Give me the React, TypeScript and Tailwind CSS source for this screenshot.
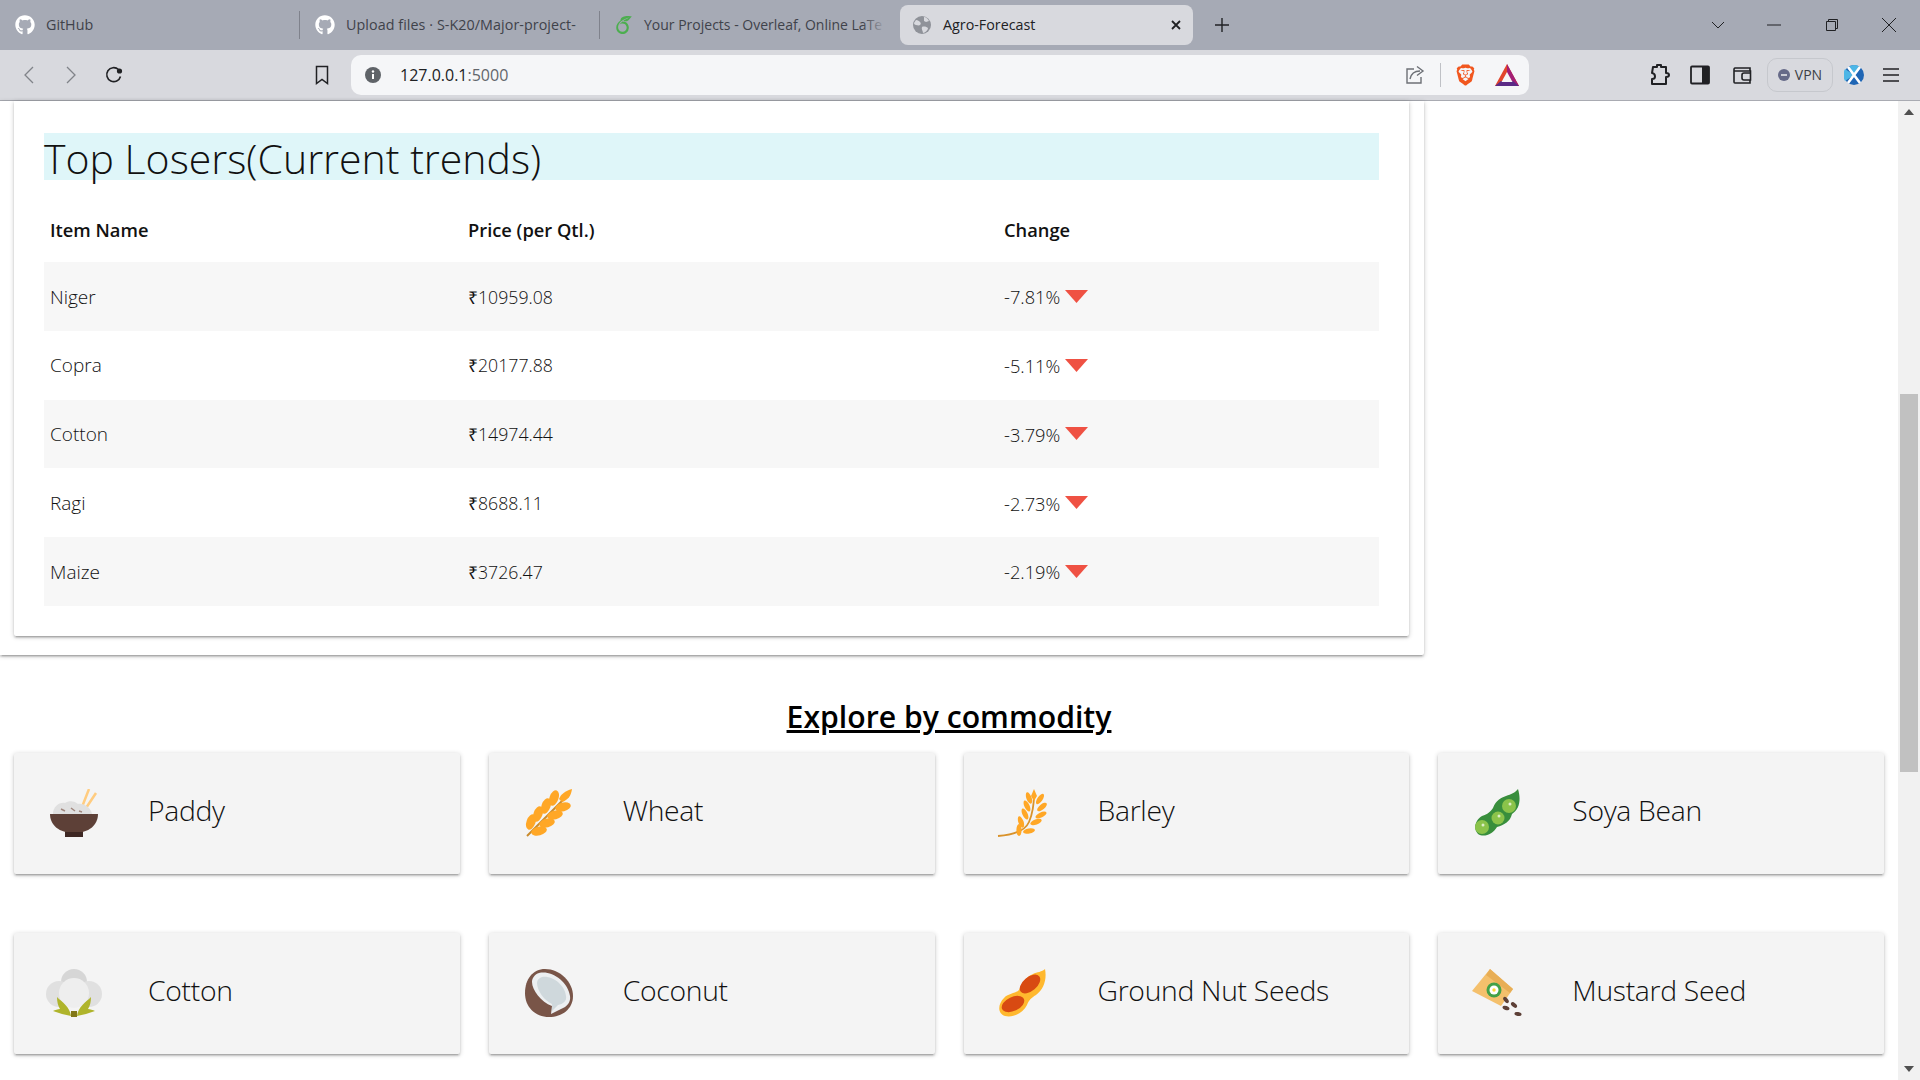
import type { ReactNode } from "react";
import { FaGithub } from "react-icons/fa";
import { SiBrave, SiOverleaf } from "react-icons/si";

const losers = [
  { name: "Niger", price: "₹10959.08", change: "-7.81%" },
  { name: "Copra", price: "₹20177.88", change: "-5.11%" },
  { name: "Cotton", price: "₹14974.44", change: "-3.79%" },
  { name: "Ragi", price: "₹8688.11", change: "-2.73%" },
  { name: "Maize", price: "₹3726.47", change: "-2.19%" },
];

const grains: [number, number, number][] = [
  [9, 33, -70], [16, 25, -70], [24, 17, -70], [32, 9, -70],
  [17, 42, -15], [25, 34, -15], [33, 26, -15], [41, 18, -15],
];

function Paddy() {
  return (
    <svg viewBox="0 0 56 48" className="w-[56px] h-[48px]">
      <path d="M36 18L43 0M40 19L50 4" stroke="#ffcc80" strokeWidth="2.5" fill="none" />
      <path d="M7 25c0-7 6-12 12-11 4-3 10-2 13 1 6-1 13 4 14 10z" fill="#e0e0e0" />
      <path d="M15 20l4 2M25 19l4 3M33 22l3 1" stroke="#a1887f" strokeWidth="1.5" />
      <path d="M4 25h48c0 11-9 19-24 19S4 36 4 25z" fill="#5d4037" />
      <rect x="19" y="43" width="18" height="5" fill="#3e2723" />
    </svg>
  );
}

function Wheat() {
  return (
    <svg viewBox="0 0 56 48" className="w-[56px] h-[48px]">
      <path d="M6 47L47 6" stroke="#c98a2b" strokeWidth="2" />
      {grains.map(([x, y, r], i) => (
        <ellipse key={i} cx={x + 1} cy={y} rx="8" ry="4.5" fill="#ffa726" transform={`rotate(${r} ${x + 1} ${y})`} />
      ))}
      <path d="M38 10c2-5 6-8 13-10-1 7-4 11-10 13z" fill="#ffa726" />
    </svg>
  );
}

function Barley() {
  return (
    <svg viewBox="0 0 56 48" className="w-[56px] h-[48px]">
      <path d="M2 47c14-1 27-5 31-14 3-7 5-17 5-28" stroke="#d9922a" strokeWidth="1.8" fill="none" />
      <path d="M38 0l3 7-3 5-3-5z" fill="#ffa726" />
      {[
        [33, 9, -20], [44, 10, 35], [31, 17, -25], [46, 18, 50], [29, 25, -25],
        [45, 26, 65], [25, 33, -20], [40, 33, 70], [23, 41, 0], [33, 42, 80],
      ].map(([x, y, r], i) => (
        <ellipse key={i} cx={x} cy={y} rx="2.6" ry="6" fill="#ffa726" transform={`rotate(${r} ${x} ${y})`} />
      ))}
    </svg>
  );
}

function Soya() {
  return (
    <svg viewBox="0 0 56 48" className="w-[56px] h-[48px]">
      <g transform="translate(-2 0)">
        <path d="M50 0c3 10 2 20-6 25-2 8-8 11-15 13-4 7-13 11-19 7-5-5-3-14 4-18 6-2 8-4 11-8 3-8 8-10 13-12 5-2 9-3 12-7z" fill="#388e3c" />
        <circle cx="14" cy="38" r="7" fill="#8bc34a" />
        <circle cx="30" cy="29" r="6.5" fill="#8bc34a" />
        <circle cx="41" cy="17" r="7" fill="#8bc34a" />
        <circle cx="15" cy="36" r="1.5" fill="#dcedc8" />
        <circle cx="31" cy="27" r="1.5" fill="#dcedc8" />
        <circle cx="42" cy="15" r="1.5" fill="#dcedc8" />
      </g>
    </svg>
  );
}

function Cotton() {
  return (
    <svg viewBox="0 0 56 48" className="w-[56px] h-[48px]">
      <circle cx="28" cy="13" r="13" fill="#d6d6d6" />
      <circle cx="13" cy="25" r="13" fill="#e0e0e0" />
      <circle cx="43" cy="25" r="13" fill="#e0e0e0" />
      <circle cx="28" cy="24" r="15" fill="#eeeeee" />
      <path d="M25 47C24 38 16 33 11 28c0 5 1 9 3 12-2 0-5 1-7 2 6 2 12 4 18 5z" fill="#afb42b" />
      <path d="M31 47c1-9 9-14 14-19 0 5-1 9-3 12 2 0 5 1 7 2-6 2-12 4-18 5z" fill="#afb42b" />
      <rect x="25" y="42" width="6" height="6" fill="#827717" />
    </svg>
  );
}

function Coconut() {
  return (
    <svg viewBox="0 0 56 48" className="w-[56px] h-[48px]">
      <path d="M24 0c15 0 28 13 28 27 0 13-11 21-24 21C14 48 4 38 4 24 4 10 12 0 24 0z" fill="#795548" />
      <path d="M18 4c12-3 29 8 31 23 1 6-3 11-9 13l-10 5 1-8C20 33 11 21 11 13c0-4 3-8 7-9z" fill="#eceff1" />
      <path d="M21 8c9-2 23 7 24 19 1 5-3 8-8 9l-6 6 0-7c-7-3-15-13-15-21 0-3 2-5 5-6z" fill="#cfd8dc" />
    </svg>
  );
}

function Peanut() {
  return (
    <svg viewBox="0 0 56 48" className="w-[56px] h-[48px]">
      <g transform="translate(-1 0)">
        <path d="M50 0c2 10-1 20-9 26-5 3-7 5-9 10-4 8-14 13-22 11C2 44 3 35 9 29c5-5 11-4 15-8 3-7 7-13 14-16 4-2 9-2 12-5z" fill="#ffb82e" />
        <ellipse cx="35" cy="15" rx="12" ry="7" fill="#d84a12" transform="rotate(-40 35 15)" />
        <ellipse cx="18" cy="35" rx="12" ry="7" fill="#d84a12" transform="rotate(-25 18 35)" />
      </g>
    </svg>
  );
}

function Mustard() {
  return (
    <svg viewBox="0 0 56 48" className="w-[56px] h-[48px]">
      <g transform="translate(-2 0)">
        <path d="M22 0L45 20 33 37 4 22z" fill="#f4c06c" />
        <path d="M22 0L45 20 42 24 18 6z" fill="#e8ae55" />
        <circle cx="26" cy="21" r="7.5" fill="#43a047" />
        <circle cx="26" cy="21" r="4.5" fill="#ffffff" />
        <circle cx="26" cy="21" r="1.7" fill="#fdd835" />
        {[
          [38, 31, 50], [46, 36, 40], [38, 39, 20], [50, 45, 10],
        ].map(([x, y, r], i) => (
          <ellipse key={i} cx={x} cy={y} rx="3.6" ry="2" fill="#5d4037" transform={`rotate(${r} ${x} ${y})`} />
        ))}
      </g>
    </svg>
  );
}

const commodities: { name: string; icon: ReactNode }[] = [
  { name: "Paddy", icon: <Paddy /> },
  { name: "Wheat", icon: <Wheat /> },
  { name: "Barley", icon: <Barley /> },
  { name: "Soya Bean", icon: <Soya /> },
  { name: "Cotton", icon: <Cotton /> },
  { name: "Coconut", icon: <Coconut /> },
  { name: "Ground Nut Seeds", icon: <Peanut /> },
  { name: "Mustard Seed", icon: <Mustard /> },
];

function TabBar() {
  return (
    <div className="flex items-center h-[50px] bg-[#a6aab5] text-[14.3px] text-[#3f424a]">
      <div className="flex items-center w-[300px] h-[28px] pl-[15px] gap-[11px] border-r border-[#7f828c]">
        <FaGithub className="text-white w-[20px] h-[20px]" />
        <span className="mb-[1px]">GitHub</span>
      </div>
      <div className="flex items-center w-[300px] h-[28px] pl-[15px] gap-[11px] border-r border-[#7f828c]">
        <FaGithub className="text-white w-[20px] h-[20px]" />
        <span className="mb-[1px] tracking-[0.07px]">Upload files · S-K20/Major-project-</span>
      </div>
      <div className="relative flex items-center w-[300px] h-[28px] pl-[15px] gap-[11px] whitespace-nowrap text-[14px]">
        <SiOverleaf className="text-[#4cae4f] w-[18px] h-[18px] shrink-0" />
        <span className="mb-[1px]">Your Projects - Overleaf, Online LaTe</span>
        <div className="absolute right-[14px] top-0 w-[24px] h-full bg-gradient-to-r from-transparent to-[#a6aab5]" />
      </div>
      <div className="flex items-center w-[293px] h-[40px] pl-[13px] pr-[12px] gap-[12px] rounded-lg bg-[#d8d9de] text-[#202124]">
        <svg viewBox="0 0 18 18" className="w-[18px] h-[18px]">
          <circle cx="9" cy="9" r="9" fill="#8f9299" />
          <path d="M3 4c2 0 3 1 4 2s1 2 0 3-3 0-4 0-2-1-2-2zM11 1c2 0 4 2 5 4l-3 1-2-1zM9 11c2-1 5 0 6 1 0 2-3 5-5 5 0-2-2-4-1-6z" fill="#d8d9de" />
        </svg>
        <span className="flex-1 mb-[1px]">Agro-Forecast</span>
        <svg viewBox="0 0 10 10" className="w-[10px] h-[10px]">
          <path d="M1 1l8 8M9 1L1 9" stroke="#202124" strokeWidth="1.8" />
        </svg>
      </div>
      <svg viewBox="0 0 16 16" className="w-[16px] h-[16px] ml-[21px]">
        <path d="M8 1v14M1 8h14" stroke="#202124" strokeWidth="1.4" />
      </svg>
      <div className="flex-1" />
      <svg viewBox="0 0 14 10" className="w-[14px] h-[10px]">
        <path d="M1 2l6 6 6-6" stroke="#202124" strokeWidth="1" fill="none" />
      </svg>
      <svg viewBox="0 0 14 14" className="w-[14px] h-[14px] ml-[42px]">
        <path d="M0 7h14" stroke="#202124" strokeWidth="1" />
      </svg>
      <svg viewBox="0 0 14 14" className="w-[14px] h-[14px] ml-[44px]">
        <path d="M1.5 3.5h9v9h-9zM3.5 3.5v-2h9v9h-2" stroke="#202124" strokeWidth="1" fill="none" />
      </svg>
      <svg viewBox="0 0 14 14" className="w-[14px] h-[14px] ml-[43px] mr-[24px]">
        <path d="M0 0l14 14M14 0L0 14" stroke="#202124" strokeWidth="1" />
      </svg>
    </div>
  );
}

function Toolbar() {
  return (
    <div className="flex items-center h-[51px] pb-[1px] bg-[#d8d9de] border-b border-[#a9abb2] text-[#202124]">
      <svg viewBox="0 0 12 18" className="w-[12px] h-[18px] ml-[23px]">
        <path d="M10 1L2 9l8 8" stroke="#808389" strokeWidth="1.3" fill="none" />
      </svg>
      <svg viewBox="0 0 12 18" className="w-[12px] h-[18px] ml-[30px]">
        <path d="M2 1l8 8-8 8" stroke="#808389" strokeWidth="1.3" fill="none" />
      </svg>
      <svg viewBox="0 0 20 20" className="w-[20px] h-[20px] ml-[27px]">
        <path d="M16.5 11.5A7 7 0 1 1 14.5 4.5" stroke="#202124" strokeWidth="1.6" fill="none" />
        <circle cx="15.5" cy="6" r="2.6" fill="#202124" />
      </svg>
      <svg viewBox="0 0 14 20" className="w-[14px] h-[20px] ml-[191px]">
        <path d="M1.5 1.5h11v17L7 14.5l-5.5 4z" stroke="#202124" strokeWidth="1.5" fill="none" />
      </svg>
      <div className="flex items-center w-[1178px] h-[40px] ml-[22px] rounded-[10px] bg-[#f5f6f8]">
        <svg viewBox="0 0 16 16" className="w-[16px] h-[16px] ml-[14px]">
          <circle cx="8" cy="8" r="8" fill="#5f6368" />
          <path d="M8 7v5" stroke="#ffffff" strokeWidth="2" />
          <circle cx="8" cy="4.5" r="1.2" fill="#ffffff" />
        </svg>
        <span className="ml-[19px] text-[16px] flex-1">
          127.0.0.1<span className="text-[#62656b]">:5000</span>
        </span>
        <svg viewBox="0 0 20 20" className="w-[20px] h-[20px]">
          <path d="M9 4H2v14h14v-6" stroke="#6d7076" strokeWidth="1.4" fill="none" />
          <path d="M5 14c1-5 5-8 10-8M12 1.5L18 6l-6 4.5" stroke="#6d7076" strokeWidth="1.4" fill="none" />
        </svg>
        <div className="w-[1px] h-[24px] bg-[#bfc1c6] ml-[15px]" />
        <SiBrave className="text-[#f1571f] w-[21px] h-[24px] ml-[14px]" />
        <svg viewBox="0 0 24 22" className="w-[24px] h-[22px] ml-[19px] mr-[10px]">
          <path d="M12 0l12 22H0z" fill="#e2452c" />
          <path d="M12 0l12 22H12z" fill="#a31e75" />
          <path d="M0 22h24l-6-5H6z" fill="#5b2a86" />
          <path d="M12 8l5.5 10h-11z" fill="#f5f6f8" />
        </svg>
      </div>
      <svg viewBox="0 0 22 24" className="w-[22px] h-[24px] ml-[119px]">
        <path d="M5 4h4V2h4v2h5v6c2 0 3 1 3 2s-1 2-3 2v7H4v-5c2 0 3-1 3-2.500S6 10 4 10z" stroke="#202124" strokeWidth="2" fill="none" strokeLinejoin="round" />
      </svg>
      <svg viewBox="0 0 20 20" className="w-[20px] h-[20px] ml-[20px]">
        <rect x="1" y="1.500" width="18" height="17" rx="1" stroke="#202124" strokeWidth="1.800" fill="none" />
        <rect x="12" y="1.500" width="7" height="17" fill="#202124" />
      </svg>
      <svg viewBox="0 0 20 20" className="w-[20px] h-[20px] ml-[22px]">
        <path d="M18 6V3H3a1.500 1.500 0 0 0-1 1.500V17a1 1 0 0 0 1 1h15v-3M2 6h16.500v9H12a2 2 0 0 1-2-2v-3a2 2 0 0 1 2-2h6.500" stroke="#202124" strokeWidth="1.600" fill="none" />
      </svg>
      <div className="flex items-center justify-center gap-[5px] w-[66px] h-[34px] ml-[15px] rounded-[10px] border border-[#c6c8cd] text-[14px] text-[#3c3f45]">
        <svg viewBox="0 0 12 12" className="w-[12px] h-[12px]">
          <circle cx="6" cy="6" r="6" fill="#666a88" />
          <path d="M3 6h6" stroke="#d8d9de" strokeWidth="1.800" />
        </svg>
        VPN
      </div>
      <svg viewBox="0 0 20 20" className="w-[20px] h-[20px] ml-[11px]">
        <circle cx="10" cy="10" r="10" fill="#1f66b5" />
        <path d="M1 4l9 6-9 6c-2-4-2-8 0-12z" fill="#4db6e6" />
        <path d="M10 0c3 0 5 1 6 3l-6 7-5-8c1-1 3-2 5-2z" fill="#4db6e6" />
        <path d="M4 2l12 16M16 2L4 18" stroke="#ffffff" strokeWidth="2.600" />
      </svg>
      <svg viewBox="0 0 18 16" className="w-[18px] h-[16px] ml-[18px]">
        <path d="M1 2h16M1 8h16M1 14h16" stroke="#202124" strokeWidth="1.600" />
      </svg>
    </div>
  );
}

function LosersTable() {
  return (
    <div className="w-[1424px] pl-[14px] pb-[19px] rounded-br-[2px] bg-white shadow-[0_2px_2px_0_rgba(0,0,0,0.14),0_3px_1px_-2px_rgba(0,0,0,0.12),0_1px_5px_0_rgba(0,0,0,0.2)]">
      <div className="w-[1395px] px-[30px] pt-[32px] pb-[30px] rounded-b-[2px] bg-white shadow-[0_2px_2px_0_rgba(0,0,0,0.14),0_3px_1px_-2px_rgba(0,0,0,0.12),0_1px_5px_0_rgba(0,0,0,0.2)]">
        <h4 className="h-[47px] text-[41px] leading-[51px] font-light text-[#111111] bg-[#dff6f9] whitespace-nowrap">
          Top Losers(Current trends)
        </h4>
        <table className="w-full mt-[19px] table-fixed text-[18.3px] text-[#111111]">
          <colgroup>
            <col className="w-[418px]" />
            <col className="w-[536px]" />
            <col />
          </colgroup>
          <thead>
            <tr className="h-[63px] text-left">
              <th className="pl-[6px] pb-[2px] font-semibold">Item Name</th>
              <th className="pl-[6px] pb-[2px] font-semibold">Price (per Qtl.)</th>
              <th className="pl-[6px] pb-[2px] font-semibold">Change</th>
            </tr>
          </thead>
          <tbody>
            {losers.map((row, i) => (
              <tr key={row.name} className={i % 2 === 0 ? "h-[68.8px] bg-[#f7f7f7]" : "h-[68.8px]"}>
                <td className="pl-[6px] pt-[1px] font-light text-[19px]">{row.name}</td>
                <td className="pl-[6px] pt-[1px] font-light text-[17.7px]">{row.price}</td>
                <td className="pl-[6px] pt-[1px] font-light">
                  <span className="flex items-center gap-[5px]">
                    {row.change}
                    <svg viewBox="0 0 23 13" className="w-[23px] h-[13px] mb-[1px]">
                      <path d="M0 0h23L11.500 13z" fill="#ef5143" />
                    </svg>
                  </span>
                </td>
              </tr>
            ))}
          </tbody>
        </table>
      </div>
    </div>
  );
}

export default function App() {
  return (
    <div className="w-[1920px] h-[1080px] overflow-hidden bg-white font-['Open_Sans',sans-serif]">
      <TabBar />
      <Toolbar />
      <div className="flex h-[979px]">
        <main className="w-[1898px]">
          <LosersTable />
          <h2 className="mt-[42px] text-center text-[30.2px] leading-[40px] font-semibold underline text-black">
            Explore by commodity
          </h2>
          <div className="grid grid-cols-4 gap-x-[29px] gap-y-[59px] w-[1870px] ml-[14px] mt-[16px]">
            {commodities.map((item) => (
              <div
                key={item.name}
                className="flex items-center gap-[46px] h-[121px] pl-[32px] rounded-[2px] bg-[#f4f4f4] shadow-[0_2px_2px_0_rgba(0,0,0,0.14),0_3px_1px_-2px_rgba(0,0,0,0.12),0_1px_5px_0_rgba(0,0,0,0.2)]"
              >
                {item.icon}
                <span className="text-[28.3px] font-light tracking-[-0.3px] text-[#111111] mb-[7px]">{item.name}</span>
              </div>
            ))}
          </div>
        </main>
        <div className="flex flex-col items-center w-[22px] bg-[#f1f1f1]">
          <svg viewBox="0 0 10 6" className="w-[10px] h-[6px] mt-[8px]">
            <path d="M0 6h10L5 0z" fill="#505050" />
          </svg>
          <div className="w-[18px] h-[378px] mt-[279px] bg-[#c1c1c1]" />
          <div className="flex-1" />
          <svg viewBox="0 0 10 6" className="w-[10px] h-[6px] mb-[8px]">
            <path d="M0 0h10L5 6z" fill="#505050" />
          </svg>
        </div>
      </div>
    </div>
  );
}
